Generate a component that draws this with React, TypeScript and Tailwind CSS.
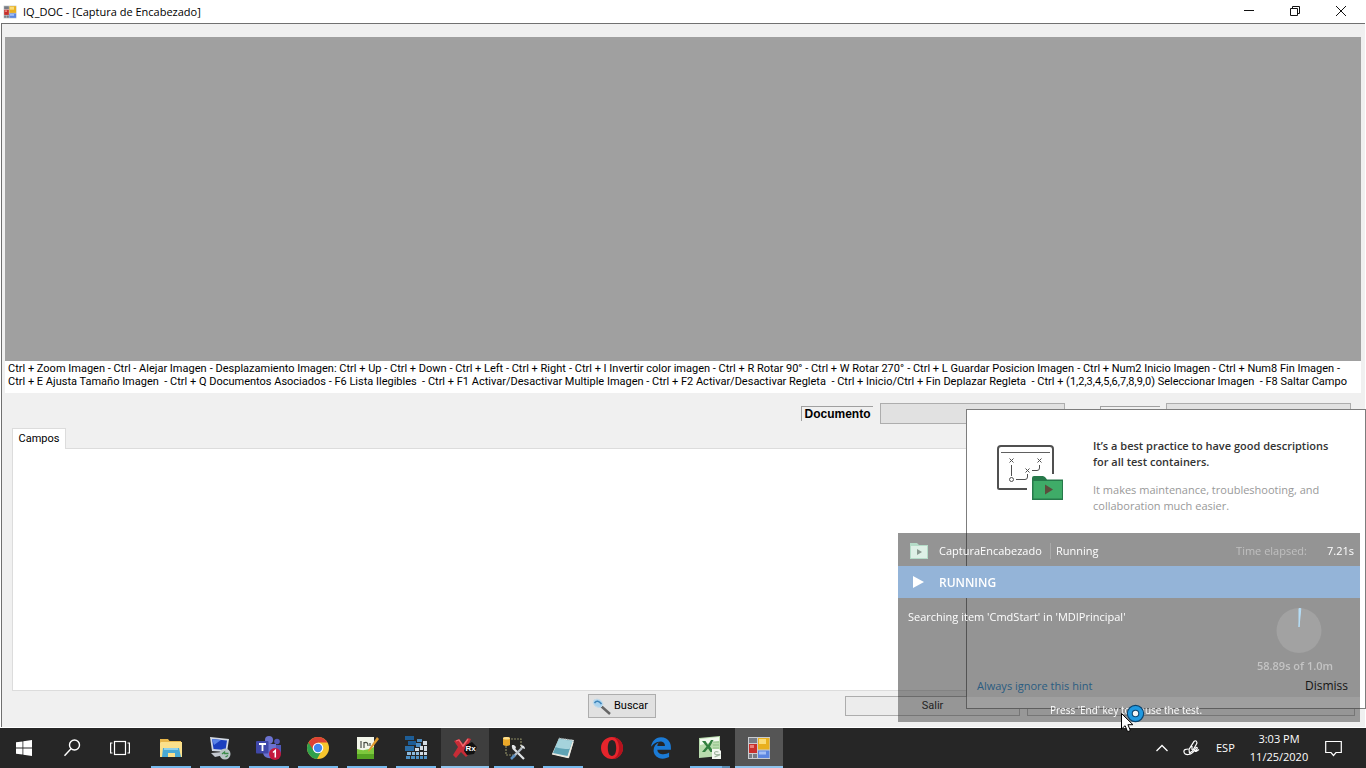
import type { ReactNode } from "react";
import { FaEdgeLegacy } from "react-icons/fa";

const shortcutsTop = [
  "Ctrl + Zoom Imagen - Ctrl - Alejar Imagen",
  "- Desplazamiento Imagen: Ctrl + Up - Ctrl + Down - Ctrl + Left - Ctrl + Right",
  "- Ctrl + I Invertir color imagen - Ctrl + R Rotar 90° - Ctrl + W Rotar 270°",
  "- Ctrl + L Guardar Posicion Imagen",
  "- Ctrl + Num2 Inicio Imagen - Ctrl + Num8 Fin Imagen -",
];

const shortcutsBottom = [
  "Ctrl + E Ajusta Tamaño Imagen",
  "- Ctrl + Q Documentos Asociados - F6 Lista Ilegibles",
  "- Ctrl + F1 Activar/Desactivar Multiple Imagen - Ctrl + F2 Activar/Desactivar Regleta",
  "- Ctrl + Inicio/Ctrl + Fin Deplazar Regleta",
  "- Ctrl + (1,2,3,4,5,6,7,8,9,0) Seleccionar Imagen",
  "- F8 Saltar Campo",
];

function FormsIcon({ className }: { className: string }) {
  return (
    <svg className={className} viewBox="0 0 24 24" aria-hidden="true">
      <rect x="1" y="1" width="22" height="22" fill="#c9ccd0" />
      <path d="M2 2h8v5H2zM2 18h3v4H2zM6 18h4v4H6z" fill="#777c84" />
      <rect x="2" y="8" width="8" height="9" fill="#c8302c" />
      <rect x="3" y="9" width="4" height="3" fill="#e8807a" />
      <rect x="11" y="2" width="11.500" height="11.500" fill="#e9b01f" />
      <rect x="12" y="3" width="7" height="5" fill="#fbdc76" />
      <rect x="11" y="14.500" width="11.500" height="7.500" fill="#5c86e0" />
      <rect x="12" y="15.500" width="7" height="3" fill="#a3bff5" />
    </svg>
  );
}

function SearchIcon() {
  return (
    <svg className="size-5" viewBox="0 0 20 20" fill="none" stroke="#fff" strokeWidth="1.400" aria-hidden="true">
      <circle cx="12.500" cy="7" r="5" />
      <path d="M9 10.800 2.500 17.800" />
    </svg>
  );
}

function TaskViewIcon() {
  return (
    <svg className="size-5" viewBox="0 0 20 20" fill="none" stroke="#fff" strokeWidth="1.200" aria-hidden="true">
      <rect x="4.500" y="3.500" width="11" height="13" />
      <path d="M2.500 5H.6v10h1.900M17.500 5h1.900v10h-1.900" />
    </svg>
  );
}

function ExplorerIcon() {
  return (
    <svg className="size-6" viewBox="0 0 24 24" aria-hidden="true">
      <path d="M1 3h8l1.500 2H22v15H1z" fill="#e8b64a" />
      <path d="M2 6h21v15H1V7z" fill="#fbe08b" />
      <path d="M4 12h16l2 9h-6v-4H9v4H3z" fill="#49a9d4" />
      <path d="M5 12h14v2H5z" fill="#8ed0ea" />
    </svg>
  );
}

function RemoteIcon() {
  return (
    <svg className="size-6" viewBox="0 0 24 24" aria-hidden="true">
      <path d="m2 1 19 2-2 13-15-1z" fill="#d2d9e4" />
      <path d="m4 3 15 1.500-1.500 9.500L5.500 13z" fill="#1b3fbf" />
      <path d="m4 3 9 .9L6 9z" fill="#5a84e8" />
      <path d="m3 17 12-1 1 3-9 2z" fill="#c4c9d0" />
      <circle cx="17" cy="18" r="5.500" fill="#b9c4c6" />
      <path d="m14 18 2.500-2v1.500h4M20 19.500 17.500 21" fill="none" stroke="#3d8c4b" strokeWidth="1.300" />
    </svg>
  );
}

function TeamsIcon() {
  return (
    <svg className="h-6 w-7" viewBox="0 0 28 24" aria-hidden="true">
      <circle cx="14" cy="4" r="4" fill="#6b72d0" />
      <circle cx="22" cy="5.500" r="2.800" fill="#5158b8" />
      <path d="M17 9h9v8q-2 4-6 3z" fill="#5158b8" />
      <path d="M8 8h13v10q-3 5-8 4-5-1-5-6z" fill="#6b72d0" />
      <rect x="1" y="5" width="12.500" height="12.500" rx="1" fill="#3f47a8" />
      <path d="M4 8h7M7.500 8v7" stroke="#fff" strokeWidth="1.800" />
      <circle cx="20" cy="18" r="6" fill="#c4183c" />
      <path d="m18 16.500 2.300-2V21.500" fill="none" stroke="#fff" strokeWidth="1.500" />
    </svg>
  );
}

function ChromeIcon() {
  return (
    <svg className="size-6" viewBox="0 0 24 24" aria-hidden="true">
      <circle cx="12" cy="12" r="11" fill="#f7c52d" />
      <path d="M12 12 2.500 6.500A11 11 0 0 0 11 23l4.500-8z" fill="#2fa04c" />
      <path d="M2.500 6.500A11 11 0 0 1 21.500 6.500H12L7.500 14.500z" fill="#dd4235" />
      <circle cx="12" cy="12" r="5.300" fill="#fff" />
      <circle cx="12" cy="12" r="4.200" fill="#4286f0" />
    </svg>
  );
}

function NotepadPlusIcon() {
  return (
    <svg className="size-6" viewBox="0 0 24 24" aria-hidden="true">
      <path d="M2 1h17v22H2z" fill="#f3f6ea" />
      <path d="M2 13q8 3 17-2v12H2z" fill="#7dc83d" />
      <path d="M2 18h17v5H2z" fill="#55a323" />
      <path d="M6 5v7M9 12V6M9 7q4-2 4 3M15 7v3" fill="none" stroke="#4b4f45" strokeWidth="1.200" />
      <path d="m22 1-8 12-1 3 2.500-2L24 3z" fill="#e09a2c" />
    </svg>
  );
}

function FirewallIcon() {
  return (
    <svg className="size-6" viewBox="0 0 24 24" aria-hidden="true">
      <path d="M1 0h9v4H1zM4 5h8v4H4z" fill="#1d5d96" />
      <path d="M13 3h5v3h-5zM12 7h5v4h-5z" fill="#4e8cbf" />
      <path d="M1 10h9v5H1z" fill="#2a6da6" />
      <path d="M11 12h4v3h-4zM16 10h3v4h-3zM19 5h4v4h-4zM20 10h3v5h-3zM16 16h3v3h-3zM20 16h3v3h-3z" fill="#d5dde4" />
      <path d="M3 16h4v3H3zM8 16h3v3H8zM12 16h3v3h-3z" fill="#8ebbdd" />
      <path d="M2 20h4v3H2zM7 20h4v3H7zM12 20h3v3h-3zM16 20h3v3h-3zM20 20h3v3h-3z" fill="#4d91c6" />
    </svg>
  );
}

function RanorexIcon() {
  return (
    <svg className="size-6" viewBox="0 0 24 24" aria-hidden="true">
      <path d="m1 5 5-2 4 5 5-6 3 1-4 9 3 5-4 4-5-5-5 6-3-3 5-8z" fill="#c72c36" />
      <path d="m3 5 3-1 4 6 5-7" fill="none" stroke="#ef6a70" strokeWidth="1.300" />
      <path d="m13 9 6-3 5 5-3 7-7 1-3-4z" fill="#111" />
      <text x="17.500" y="15" textAnchor="middle" className="font-['Liberation_Sans'] text-[8px] font-bold" fill="#fff">
        Rx
      </text>
    </svg>
  );
}

function SqlToolsIcon() {
  return (
    <svg className="size-6" viewBox="0 0 24 24" aria-hidden="true">
      <path d="M9 3h10v9M4 10v9h7" fill="none" stroke="#8b8a63" strokeWidth="1.200" strokeDasharray="2 1" />
      <path d="M1 2q3.500-2 7 0v7q-3.500 2-7 0z" fill="#eba829" />
      <ellipse cx="4.500" cy="2.300" rx="3.500" ry="1.300" fill="#ffe08c" />
      <path d="m11 12 11 11" stroke="#e2e5e8" strokeWidth="2.200" />
      <path d="m20 12-9 9" stroke="#b4bcc4" strokeWidth="2.400" />
      <path d="m18 9 2 3 3 1q0-4-5-4zM10 9q-1 4 3 5l1-3-2-2z" fill="#e2e5e8" />
      <path d="m13 19-4 4" stroke="#5d8fc0" strokeWidth="2.500" />
    </svg>
  );
}

function NotebookIcon() {
  return (
    <svg className="size-6" viewBox="0 0 24 24" aria-hidden="true">
      <path d="m8 2 15 2-5 18L1 18z" fill="#dbe4e4" />
      <path d="m8 3 13.500 2-5 15L2 17z" fill="#5fa3b4" />
      <path d="m8 3 13.500 2-3 8Q10 13 4.500 11z" fill="#a5d3dc" />
      <path d="m8 2 14 2" stroke="#7c8b8f" strokeWidth="1" strokeDasharray="1 1" />
      <path d="M1 18 17 21.500 22 6" fill="none" stroke="#f0ece0" strokeWidth="1.200" />
    </svg>
  );
}

function OperaIcon() {
  return (
    <svg className="size-6" viewBox="0 0 24 24" aria-hidden="true">
      <path fillRule="evenodd" d="M12 1C5.500 1 1 6 1 12s4.500 11 11 11 11-5 11-11S18.500 1 12 1m0 3c2.800 0 4.200 3.600 4.200 8s-1.400 8-4.200 8-4.200-3.600-4.200-8S9.200 4 12 4" fill="#e5252c" />
      <path d="M12 1c6.500 0 11 5 11 11s-4.500 11-11 11c4.500-.5 7-5.500 7-11S16.500 1.500 12 1" fill="#b5121d" />
    </svg>
  );
}

function ExcelIcon() {
  return (
    <svg className="size-6" viewBox="0 0 24 24" aria-hidden="true">
      <path d="M1 2 22 0v20L1 22z" fill="#b9dcae" />
      <path d="m2 3 19-2v4L2 9z" fill="#f2f9ee" />
      <path d="M15 6h6M15 9h6M15 12h6" stroke="#8fbd86" strokeWidth="1.200" />
      <path d="M4 5h3.500L10 9l3-5h2.500L12 10.500l4 5.500h-3.500L10 12.500 7 16H4l4.500-5.500z" fill="#327f3f" />
      <path d="M14 13h7l2 2v8h-9z" fill="#f4f8f2" />
      <path d="M20.500 16q-4-1-4 1t4 1.500-4 2.500" fill="none" stroke="#a3b8a3" strokeWidth="1.200" />
    </svg>
  );
}

type TaskItem = { name: string; icon: ReactNode; line: string; button: string };

const idle = "flex h-10 w-12 items-center justify-center relative";
const openLine = "absolute bottom-0 left-1 h-[2px] w-10 bg-[#76b9ed]";
const fullLine = "absolute bottom-0 left-0 h-[2px] w-12 bg-[#8fc3ec]";

const tasks: TaskItem[] = [
  { name: "Explorador", icon: <ExplorerIcon />, line: openLine, button: idle },
  { name: "Escritorio remoto", icon: <RemoteIcon />, line: openLine, button: idle },
  { name: "Teams", icon: <TeamsIcon />, line: openLine, button: idle },
  { name: "Chrome", icon: <ChromeIcon />, line: openLine, button: idle },
  { name: "Notepad++", icon: <NotepadPlusIcon />, line: openLine, button: idle },
  { name: "Firewall", icon: <FirewallIcon />, line: openLine, button: idle },
  { name: "Ranorex", icon: <RanorexIcon />, line: fullLine, button: "flex h-10 w-12 items-center justify-center relative bg-[#3e3e3e]" },
  { name: "SQL", icon: <SqlToolsIcon />, line: openLine, button: idle },
  { name: "Cuaderno", icon: <NotebookIcon />, line: openLine, button: idle },
  { name: "Opera", icon: <OperaIcon />, line: "hidden", button: idle },
  { name: "Edge", icon: <FaEdgeLegacy className="size-[22px] text-[#1b7bd6]" />, line: "hidden", button: idle },
  { name: "Excel", icon: <ExcelIcon />, line: "absolute bottom-0 left-1 h-[2px] w-10 border-r-8 border-[#5a8db5] bg-[#76b9ed]", button: idle },
  { name: "IQ_DOC", icon: <FormsIcon className="size-6" />, line: fullLine, button: "flex h-10 w-12 items-center justify-center relative bg-[#555]" },
];

function TitleBar() {
  return (
    <header className="flex h-[23px] items-center bg-white pr-[2px] pl-[3px]">
      <FormsIcon className="size-[14px]" />
      <h1 className="ml-[6px] flex-1 font-['Open_Sans',sans-serif] text-[11px] leading-4">IQ_DOC - [Captura de Encabezado]</h1>
      <button aria-label="Minimizar" className="flex h-5 w-[46px] items-center justify-center">
        <svg className="size-3" viewBox="0 0 12 12" stroke="#111"><path d="M1 4.500h10" /></svg>
      </button>
      <button aria-label="Restaurar" className="flex h-5 w-[46px] items-center justify-center">
        <svg className="size-3" viewBox="0 0 12 12" fill="none" stroke="#111"><path d="M1.500 2.500h7v7h-7zM3.500 2.500v-2h7v7h-2" /></svg>
      </button>
      <button aria-label="Cerrar" className="flex h-5 w-[46px] items-center justify-center">
        <svg className="size-3" viewBox="0 0 12 12" stroke="#111"><path d="m1 0 10 10M11 0 1 10" /></svg>
      </button>
    </header>
  );
}

function Hint() {
  return (
    <aside className="fixed right-0 bottom-[59px] flex min-h-[300px] w-[400px] flex-col border border-[#7d7d7d] bg-white pt-7 pr-[17px] pb-[14px] pl-[10px] text-[11px] leading-4">
      <div className="flex pl-5">
        <svg className="mt-[7px] h-14 w-[67px] shrink-0" viewBox="0 0 67 56" fill="none" aria-hidden="true">
          <path d="M30 44H2.500Q1 44 1 42.500V4q0-3 3-3h49q3 0 3 3v25" stroke="#505050" strokeWidth="2" />
          <path d="M4 7.500h49" stroke="#606060" strokeWidth="1.200" />
          <path d="m12.500 13.500 4 4m0-4-4 4M40.500 13.500l4 4m0-4-4 4M28.500 23.500l4 4m0-4-4 4" stroke="#505050" />
          <path d="M14.500 20v11M42.500 20v3q0 2.500-2.500 2.500h-5M30.500 29v3q0 2.500-2.500 2.500h-9" stroke="#505050" />
          <circle cx="14.500" cy="34.500" r="2" stroke="#505050" />
          <path d="M35 33q0-2 2-2h9q2 0 4 3.500h16V55H35z" fill="#26794a" />
          <path d="M36.500 36H65v17.500H36.500z" fill="#3fac68" />
          <path d="m48 39.500 8 5-8 5z" fill="#5c4d3c" />
        </svg>
        <div className="ml-[29px] whitespace-nowrap">
          <h2 className="font-semibold text-[#333]">It’s a best practice to have good descriptions<br />for all test containers.</h2>
          <p className="mt-3 text-[#999]">It makes maintenance, troubleshooting, and<br />collaboration much easier.</p>
        </div>
      </div>
      <div className="mt-auto flex justify-between">
        <a href="#ignore" className="text-[#2a8fd8]">Always ignore this hint</a>
        <button className="text-[12px] text-black">Dismiss</button>
      </div>
    </aside>
  );
}

function RunnerOverlay() {
  return (
    <section className="fixed right-[6px] bottom-[46px] w-[462px] text-[11px] leading-4 text-white">
      <div className="flex h-[33px] items-center bg-[#2a2a2a]/50 pt-0.5 pr-[6px] pl-3">
        <svg className="h-[17px] w-[18px]" viewBox="0 0 18 17" aria-hidden="true">
          <path d="M0 1h7l2 2h9v14H0z" fill="#b5dcc8" />
          <path d="M1 4h16v12H1z" fill="#def0e6" />
          <path d="m7 7 5 3-5 3z" fill="#8a9a90" />
        </svg>
        <span className="ml-[11px] w-[112px] border-r border-white/20">CapturaEncabezado</span>
        <span className="ml-[5px]">Running</span>
        <span className="ml-auto text-[#c0c0c0]">Time elapsed:</span>
        <span className="ml-5">7.21s</span>
      </div>
      <div className="flex h-8 items-center bg-[#94b4d8] pt-0.5 pl-[14px] text-[12px] font-semibold">
        <svg className="-mt-0.5 h-3 w-3" viewBox="0 0 12 12" fill="#fff" aria-hidden="true"><path d="M1 0v12l11-6z" /></svg>
        <span className="ml-[15px]">RUNNING</span>
      </div>
      <div className="flex h-[99px] justify-between bg-[#2a2a2a]/50 pt-[11px] pr-[27px] pl-[10px]">
        <p>Searching item 'CmdStart' in 'MDIPrincipal'</p>
        <div className="flex flex-col items-end">
          <svg className="-mt-px mr-[11px] size-[46px]" viewBox="0 0 46 46" aria-hidden="true">
            <circle cx="23" cy="22.500" r="22.500" fill="#a2a2a2" />
            <path d="M23 19V.5h1.800z" fill="#b5dcf5" stroke="#b5dcf5" />
          </svg>
          <span className="mt-1 font-semibold text-[#c4c4c4]">58.89s of 1.0m</span>
        </div>
      </div>
      <div className="flex h-[25px] items-center justify-center bg-[#404040]/50 pr-[6px] text-[10px]">Press 'End' key to pause the test.</div>
    </section>
  );
}

function BusyCursor() {
  return (
    <svg className="fixed right-[221px] bottom-9 h-7 w-6" viewBox="0 0 24 28" aria-hidden="true">
      <circle cx="14.500" cy="9.500" r="5.700" fill="#f4f4f4" stroke="#0b4570" strokeWidth="6" />
      <circle cx="14.500" cy="9.500" r="5.700" fill="none" stroke="#2199e0" strokeWidth="3.800" />
      <path d="M.5 9.500v15.500l3.600-3.300 2.500 6 2.800-1.200-2.500-5.800h5z" fill="#fff" stroke="#000" />
    </svg>
  );
}

export default function App() {
  return (
    <div className="flex min-h-screen flex-col bg-white font-['Roboto',sans-serif] text-[11px] text-black">
      <TitleBar />
      <main className="mr-px ml-px mb-px flex flex-1 flex-col border-t border-l border-[#707070] bg-[#f0f0f0] pt-[13px] pr-1 pl-[3px]">
        <div className="flex-1 bg-[#a0a0a0]" />
        <div className="h-8 bg-white pt-px pl-[3px] leading-[13px] whitespace-nowrap">
          <p className="mr-[21px] flex justify-between">
            {shortcutsTop.map((s) => <span key={s}>{s}</span>)}
          </p>
          <p className="mr-[14px] flex justify-between">
            {shortcutsBottom.map((s) => <span key={s}>{s}</span>)}
          </p>
        </div>
        <div className="mt-[10px] flex h-[21px] items-center justify-end pr-[10px]">
          <label htmlFor="documento" className="h-[15px] w-[72px] border-t border-l border-[#a0a0a0] text-center font-['Liberation_Sans',sans-serif] text-[12px] leading-[15px] font-bold">Documento</label>
          <button id="documento" className="ml-[7px] h-[21px] w-[185px] border border-[#adadad] bg-[#e1e1e1]" />
          <span className="ml-[35px] h-[15px] w-[60px] border-t border-l border-[#a0a0a0]" />
          <button aria-label="Lote" className="ml-[6px] h-[21px] w-[185px] border border-[#adadad] bg-[#e1e1e1]" />
        </div>
        <div role="tablist" className="mt-1 flex pl-[7px]">
          <button role="tab" aria-selected="true" className="z-10 -mb-px h-[21px] w-[54px] border border-b-0 border-[#dcdcdc] bg-white leading-4">Campos</button>
        </div>
        <div role="tabpanel" className="mx-[7px] h-[243px] border border-[#dcdcdc] bg-white" />
        <div className="mt-[3px] mb-[9px] flex h-6 items-center justify-end pr-[6px]">
          <button className="flex h-6 w-[68px] items-center border border-[#adadad] bg-[#e1e1e1] pl-[3px]">
            <svg className="h-[17px] w-5" viewBox="0 0 20 17" aria-hidden="true">
              <path d="m9 8 9 8" stroke="#666" strokeWidth="2.500" />
              <path d="M1 5q0-4 4-4 6 1 6 6-2 4-6 2Q2 8 1 5z" fill="#a9d2ee" stroke="#c5dbe9" />
              <path d="M2.500 5q3-4 7 1" fill="none" stroke="#3c83b8" strokeWidth="1.500" />
            </svg>
            <span className="ml-[2px]">Buscar</span>
          </button>
          <button className="ml-[189px] h-5 w-[175px] border border-[#adadad] bg-[#ececec]">Salir</button>
          <button aria-label="Guardar" className="ml-[7px] h-5 w-[328px] border border-[#adadad] bg-[#ececec]" />
        </div>
      </main>
      <footer className="flex h-10 items-center bg-[#262626] font-['Open_Sans',sans-serif] text-white">
        <button aria-label="Inicio" className="flex h-10 w-12 items-center justify-center">
          <svg className="size-4" viewBox="0 0 16 16" fill="#fff" aria-hidden="true">
            <path d="M0 2.300 6.500 1.400v6.200H0zM7.300 1.300 16 0v7.600H7.300zM0 8.400h6.500v6.200L0 13.700zM7.300 8.400H16V16l-8.700-1.200z" />
          </svg>
        </button>
        <button aria-label="Buscar" className="flex h-10 w-12 items-center justify-center"><SearchIcon /></button>
        <button aria-label="Vista de tareas" className="flex h-10 w-12 items-center justify-center"><TaskViewIcon /></button>
        <nav className="ml-[3px] flex gap-px">
          {tasks.map((t) => (
            <button key={t.name} aria-label={t.name} className={t.button}>
              {t.icon}
              <span className={t.line} />
            </button>
          ))}
        </nav>
        <div className="ml-auto flex items-center">
          <svg className="h-3 w-[14px]" viewBox="0 0 14 12" fill="none" stroke="#fff" strokeWidth="1.300" aria-hidden="true"><path d="m1.500 9 5.500-5.500L12.500 9" /></svg>
          <svg className="ml-[14px] size-[17px]" viewBox="0 0 17 17" fill="none" stroke="#fff" strokeWidth="1.200" aria-hidden="true">
            <path d="m6.500 13-.5-3.500L11 1.500q1.500-1.500 2.500 0t0 2.500L9.500 11zM9 6v4" />
            <path d="M5.500 9Q.8 9 .9 11.500 1.200 15 5.500 14.500 10 13.500 11.500 10q1.500-3.500 2.500-2.500t-1.800 3.500q-.2 1.500 3.800-1.500" />
          </svg>
          <span className="ml-4 w-5 whitespace-nowrap">ESP</span>
          <time className="ml-3 w-[62px] text-center leading-[18px] whitespace-nowrap">3:03 PM<br />11/25/2020</time>
          <svg className="mr-6 ml-[15px] size-[17px]" viewBox="0 0 17 17" fill="none" stroke="#fff" strokeWidth="1.200" aria-hidden="true">
            <path d="M.7 1.500h15.600v11H11L8.500 15.500 6 12.500H.7z" />
          </svg>
        </div>
      </footer>
      <div className="font-['Open_Sans',sans-serif]">
        <Hint />
        <RunnerOverlay />
        <BusyCursor />
      </div>
    </div>
  );
}
